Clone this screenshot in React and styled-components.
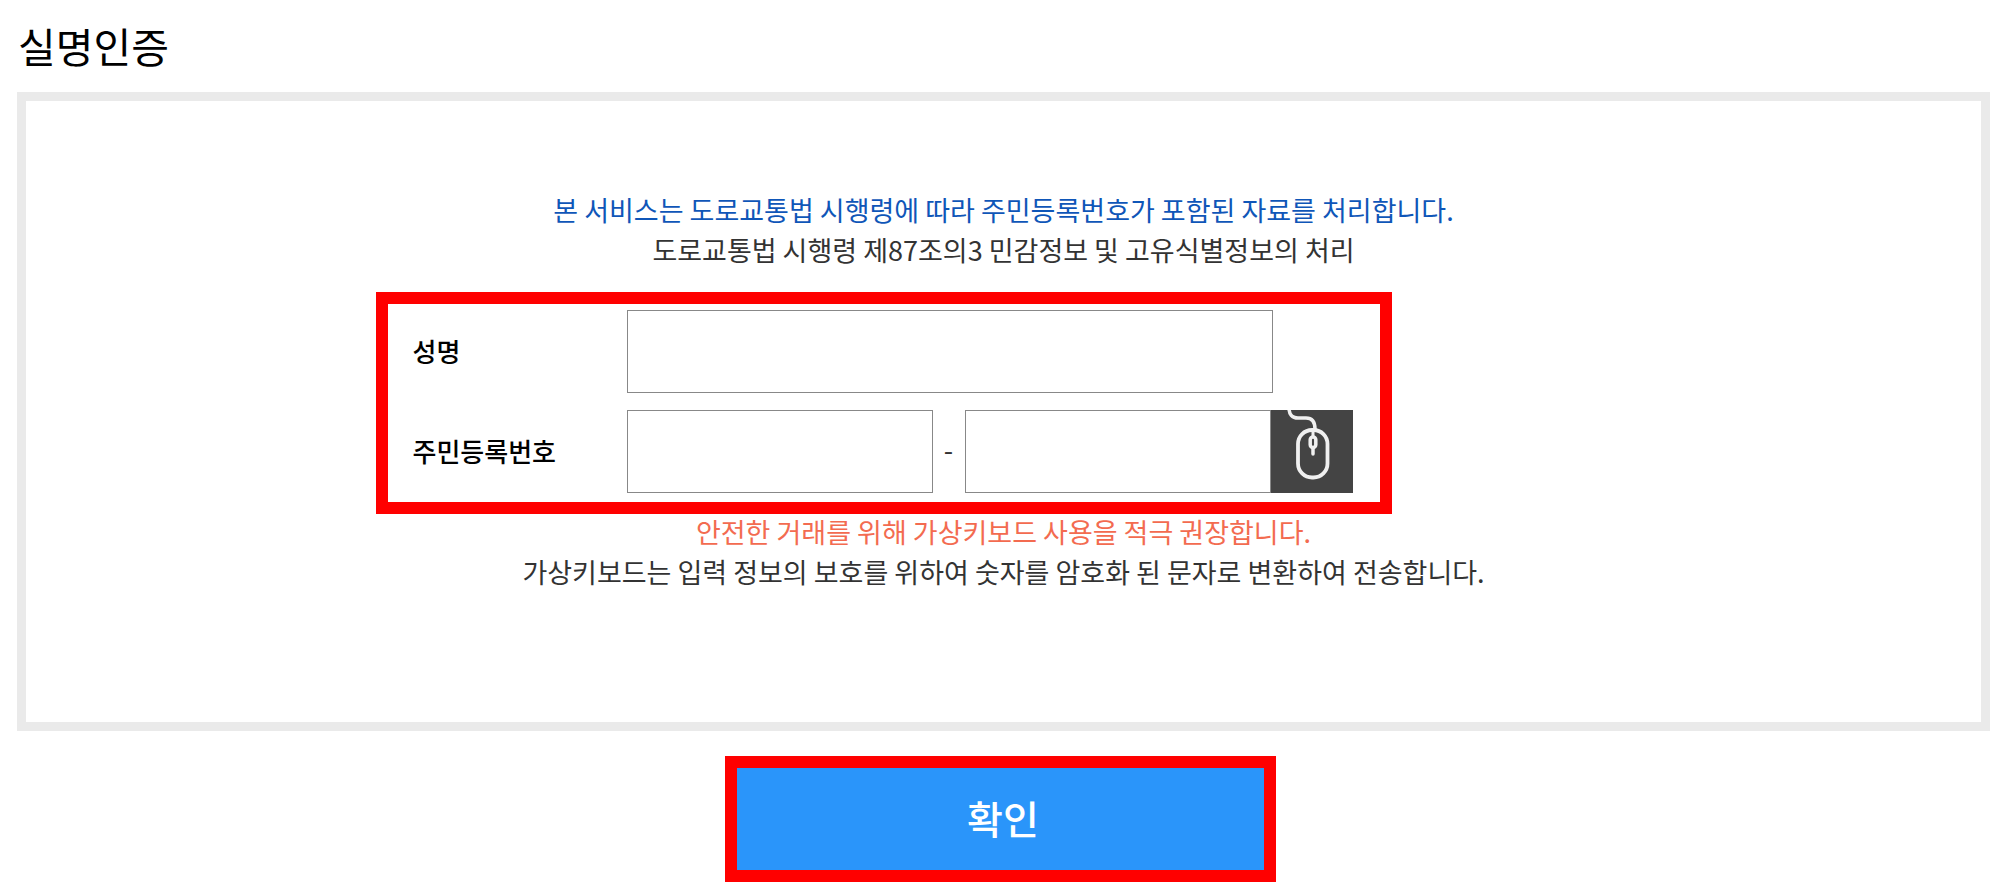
import React, { useState } from 'react';
import styled, { createGlobalStyle } from 'styled-components';

const App = () => {
  const [form, setForm] = useState({ name: '', front: '', back: '' });

  const handleChange = (e) => {
    setForm({ ...form, [e.target.name]: e.target.value });
  };

  return (
    <>
      <GlobalStyle />
      <Page onSubmit={(e) => e.preventDefault()}>
        <Title>실명인증</Title>
        <Panel>
          <Notice>
            <NoticeLine $color="#0f56b8">
              본 서비스는 도로교통법 시행령에 따라 주민등록번호가 포함된 자료를 처리합니다.
            </NoticeLine>
            <NoticeLine>도로교통법 시행령 제87조의3 민감정보 및 고유식별정보의 처리</NoticeLine>
          </Notice>
          <FieldsWrap>
            <Fields>
              <Label htmlFor="name">성명</Label>
              <TextInput id="name" name="name" type="text" value={form.name} onChange={handleChange} />
              <Label htmlFor="front">주민등록번호</Label>
              <NumberRow>
                <ShortInput
                  id="front"
                  name="front"
                  type="text"
                  maxLength={6}
                  value={form.front}
                  onChange={handleChange}
                />
                <Dash>-</Dash>
                <ShortInput
                  name="back"
                  type="password"
                  maxLength={7}
                  aria-label="주민등록번호 뒷자리"
                  value={form.back}
                  onChange={handleChange}
                />
                <KeypadButton type="button" aria-label="가상키보드">
                  <MouseIcon />
                </KeypadButton>
              </NumberRow>
            </Fields>
          </FieldsWrap>
          <NoticeLine $color="#f36b50">안전한 거래를 위해 가상키보드 사용을 적극 권장합니다.</NoticeLine>
          <NoticeLine>
            가상키보드는 입력 정보의 보호를 위하여 숫자를 암호화 된 문자로 변환하여 전송합니다.
          </NoticeLine>
        </Panel>
        <SubmitButton type="submit">확인</SubmitButton>
      </Page>
    </>
  );
};

const MouseIcon = () => (
  <svg width="82" height="83" viewBox="0 0 82 83" fill="none" stroke="#f0f0f0" aria-hidden="true">
    <path d="M18 -2C18 4 21 8 27 8H35C41 8 44 12 44 19" strokeWidth="3.5" />
    <rect x="27" y="20" width="29.5" height="47.5" rx="14" strokeWidth="3.8" />
    <path d="M42 20V27" strokeWidth="3" />
    <rect x="39.2" y="27" width="5.6" height="10.5" rx="2.8" strokeWidth="3.5" />
    <path d="M42 38V44" strokeWidth="3.5" strokeLinecap="round" />
  </svg>
);

const GlobalStyle = createGlobalStyle`
  * {
    box-sizing: border-box;
  }

  body {
    margin: 0;
    background-color: #fff;
    color: #333;
    font-family: 'Noto Sans CJK KR', sans-serif;
    font-size: 27px;
  }

  button,
  input {
    font: inherit;
  }
`;

const Page = styled.form`
  display: flex;
  flex-direction: column;
`;

const Title = styled.h1`
  margin: 15px 18px 17px;
  color: #000;
  font-size: 41px;
  font-weight: 400;
  line-height: 60px;
`;

const Panel = styled.section`
  margin: 0 10px 0 17px;
  padding: 89px 20px 130px;
  border: 9px solid #eaeaea;
`;

const Notice = styled.div`
  margin-bottom: 22px;
`;

const NoticeLine = styled.p`
  margin: 0;
  color: ${(props) => props.$color || '#333'};
  line-height: 40px;
  text-align: center;
`;

const FieldsWrap = styled.div`
  display: flex;
  max-width: 1256px;
  margin: 0 auto -2px;
`;

const Fields = styled.div`
  display: grid;
  grid-template-columns: 214px 1fr;
  row-gap: 17px;
  align-items: center;
  width: 1016px;
  padding: 6px 26px 9px 25px;
  border: 12px solid #ff0000;
`;

const Label = styled.label`
  padding-bottom: 2px;
  color: #000;
  font-size: 26px;
  font-weight: 500;
`;

const TextInput = styled.input`
  width: 646px;
  height: 83px;
  padding: 0 16px;
  border: 1px solid #888;
  border-radius: 0;
  background-color: #fff;
`;

const ShortInput = styled(TextInput)`
  width: 306px;
`;

const NumberRow = styled.div`
  display: flex;
  align-items: center;
`;

const Dash = styled.span`
  width: 32px;
  padding-bottom: 4px;
  text-align: center;
`;

const KeypadButton = styled.button`
  display: flex;
  width: 82px;
  height: 83px;
  padding: 0;
  border: 0;
  background-color: #444;
  cursor: pointer;
`;

const SubmitButton = styled.button`
  align-self: center;
  width: 551px;
  height: 126px;
  margin: 25px 0 9px;
  padding: 0 0 4px 6px;
  border: 12px solid #ff0000;
  background-color: #2a95fa;
  color: #fff;
  font-size: 39px;
  font-weight: 500;
  cursor: pointer;
`;

export default App;
